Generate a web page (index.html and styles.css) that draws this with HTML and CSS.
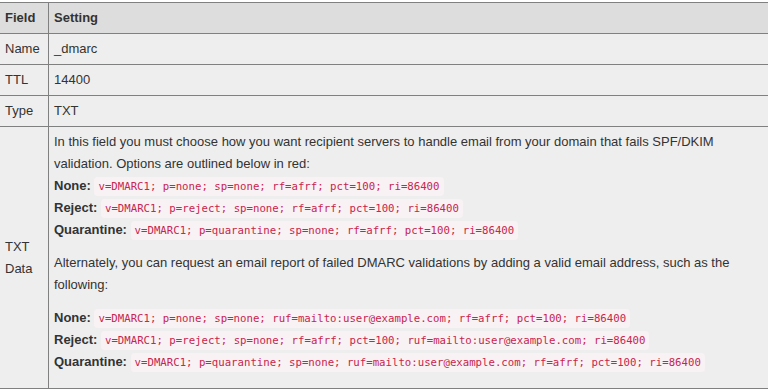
FILE: index.html
```
<!DOCTYPE html>
<html lang="en">
<head>
    <meta charset="UTF-8">
    <link rel="stylesheet" href="styles.css">
</head>
<body>
    <table class="rec">
        <tr>
            <th class="f">Field</th>
            <th>Setting</th>
        </tr>
        <tr>
            <td class="f">Name</td>
            <td>_dmarc</td>
        </tr>
        <tr>
            <td class="f">TTL</td>
            <td>14400</td>
        </tr>
        <tr>
            <td class="f">Type</td>
            <td>TXT</td>
        </tr>
        <tr>
            <td class="f">TXT Data</td>
            <td>
                <p>In this field you must choose how you want recipient servers to handle email from your domain that fails SPF/DKIM validation. Options are outlined below in red:<br>
                <b>None:</b> <code>v=DMARC1; p=none; sp=none; rf=afrf; pct=100; ri=86400</code><br>
                <b>Reject:</b> <code>v=DMARC1; p=reject; sp=none; rf=afrf; pct=100; ri=86400</code><br>
                <b>Quarantine:</b> <code>v=DMARC1; p=quarantine; sp=none; rf=afrf; pct=100; ri=86400</code></p>
                <p>Alternately, you can request an email report of failed DMARC validations by adding a valid email address, such as the following:</p>
                <p><b>None:</b> <code>v=DMARC1; p=none; sp=none; ruf=mailto:user@example.com; rf=afrf; pct=100; ri=86400</code><br>
                <b>Reject:</b> <code>v=DMARC1; p=reject; sp=none; rf=afrf; pct=100; ruf=mailto:user@example.com; ri=86400</code><br>
                <b>Quarantine:</b> <code>v=DMARC1; p=quarantine; sp=none; ruf=mailto:user@example.com; rf=afrf; pct=100; ri=86400</code></p>
            </td>
        </tr>
    </table>
</body>
</html>
```

FILE: styles.css
```
body{
    margin: 0;
    background: #fff;
    font-family: "Liberation Sans", Arial, sans-serif;
    font-size: 13px;
    color: #333;
}
.rec{
    width: 771px;
    margin: 2px 0 0 -1px;
    border-collapse: collapse;
    line-height: 22px;
}
.rec th,.rec td{
    border: 1px solid #808080;
    padding: 4px 5px;
    text-align: left;
    vertical-align: middle;
    background: #eee;
}
.rec th{
    background: #ddd;
    font-weight: bold;
}
.f{
    width: 38px;
}
.rec p{
    margin: 0 0 11px;
}
code{
    font-family: "DejaVu Sans Mono", "Liberation Mono", monospace;
    font-size: 10.7px;
    line-height: 1;
    color: #c7254e;
    background: #f9f2f4;
    padding: 3px 4px;
    border-radius: 4px;
}
```
